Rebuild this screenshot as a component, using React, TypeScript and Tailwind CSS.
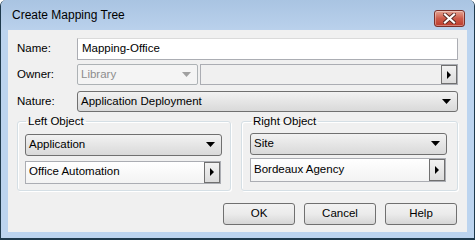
import React from 'react';

const font = { fontFamily: '"Liberation Sans", Arial, sans-serif' };

function Arrow({ gray }: { gray?: boolean }) {
  return (
    <svg width="9" height="5" viewBox="0 0 9 5" className="shrink-0">
      <path d="M0 0h9L4.5 5z" fill={gray ? '#a0a0a0' : '#000'} />
    </svg>
  );
}

function Combo({ text, className = '' }: { text: string; className?: string }) {
  return (
    <div
      className={`flex items-center justify-between pl-[3px] pr-[6px] border border-[#707070] rounded-[3px] bg-gradient-to-b from-[#f2f2f2] to-[#d9d9d9] text-black ${className}`}
    >
      <span className="leading-none">{text}</span>
      <Arrow />
    </div>
  );
}

function BrowseField({ text, className = '', disabled }: { text: string; className?: string; disabled?: boolean }) {
  return (
    <div
      className={`flex items-stretch border border-[#abadb3] ${disabled ? 'bg-[#f0f0f0]' : 'bg-gradient-to-b from-white to-[#f3f3f3]'} ${className}`}
    >
      <span className="flex-1 flex items-center pl-[3px] leading-none">{text}</span>
      <div className="w-[16px] flex items-center justify-center border border-[#707070] bg-gradient-to-b from-[#f2f2f2] to-[#dcdcdc]">
        <svg width="4" height="8" viewBox="0 0 4 8">
          <path d="M0 0v8l4-4z" fill="#000" />
        </svg>
      </div>
    </div>
  );
}

function Button({ label }: { label: string }) {
  return (
    <div className="w-[72px] h-[22px] flex items-center justify-center border border-[#707070] rounded-[3px] bg-gradient-to-b from-[#f2f2f2] via-[#ebebeb] to-[#d6d6d6] text-black">
      {label}
    </div>
  );
}

function Group({ title, children, className = '' }: { title: string; children: React.ReactNode; className?: string }) {
  return (
    <fieldset className={`border border-[#d5dfe5] rounded-[3px] shadow-[inset_1px_1px_0_#fff,1px_1px_0_#fff] ${className}`}>
      <legend className="ml-[1px] px-[2px] leading-none text-black">{title}</legend>
      {children}
    </fieldset>
  );
}

export default function App() {
  return (
    <div
      className="w-[475px] h-[240px] flex flex-col bg-[#bcd4ef] border-l border-r border-b-2 border-[#1f3a4d] rounded-t-[6px] text-[11.5px] text-black overflow-hidden"
      style={font}
    >
      {/* title bar */}
      <div className="h-[30px] flex items-center justify-between bg-gradient-to-b from-[#a9c4e2] to-[#bad1ec] pl-[11px] pr-[9px]">
        <span className="text-[12px] text-black">Create Mapping Tree</span>
        <div className="mt-[7px] w-[31px] h-[17px] flex items-center justify-center rounded-[3px] border border-[#7a302a] bg-gradient-to-b from-[#e3a393] via-[#cd5b4a] to-[#bb3a2b] shadow-[inset_0_0_0_1px_rgba(255,255,255,0.35)]">
          <svg width="13" height="11" viewBox="0 0 13 11">
            <path d="M2 1.5l9 8M11 1.5l-9 8" stroke="#5a2a24" strokeWidth="4" strokeLinecap="square" />
            <path d="M2 1.5l9 8M11 1.5l-9 8" stroke="#fff" strokeWidth="2.2" strokeLinecap="square" />
          </svg>
        </div>
      </div>

      {/* client area */}
      <div className="mx-[7px] h-[202px] bg-[#f0f0f0] flex flex-col pl-[9px] pr-[9px] pt-[8px]">
        <div className="flex items-center h-[22px]">
          <span className="w-[60px]">Name:</span>
          <div className="flex-1 h-full flex items-center pl-[4px] bg-white border border-[#abadb3] border-t-[#dadada]">
            Mapping-Office
          </div>
        </div>

        <div className="flex items-center h-[21px] mt-[4px]">
          <span className="w-[60px]">Owner:</span>
          <div className="w-[121px] h-full flex items-center justify-between pl-[3px] pr-[6px] border border-[#adb2b5] rounded-[2px] bg-[#f4f4f4] text-[#8d8d8d]">
            <span>Library</span>
            <Arrow gray />
          </div>
          <BrowseField text="" disabled className="ml-[2px] flex-1 h-full" />
        </div>

        <div className="flex items-center h-[21px] mt-[6px]">
          <span className="w-[60px]">Nature:</span>
          <Combo text="Application Deployment" className="flex-1 h-full" />
        </div>

        <div className="flex gap-[10px] mt-[4px] h-[75px]">
          <Group title="Left Object" className="w-[214px] h-full px-[7px] pt-[6px]">
            <Combo text="Application" className="h-[22px] mr-[1px]" />
            <BrowseField text="Office Automation" className="h-[23px] mt-[5px] mr-[2px]" />
          </Group>
          <Group title="Right Object" className="flex-1 h-full px-[8px] pt-[5px]">
            <Combo text="Site" className="h-[22px] mr-[2px]" />
            <BrowseField text="Bordeaux Agency" className="h-[24px] mt-[3px] mr-[3px]" />
          </Group>
        </div>

        <div className="flex justify-end gap-[9px] mt-[12px] mr-[1px]">
          <Button label="OK" />
          <Button label="Cancel" />
          <Button label="Help" />
        </div>
      </div>
    </div>
  );
}
